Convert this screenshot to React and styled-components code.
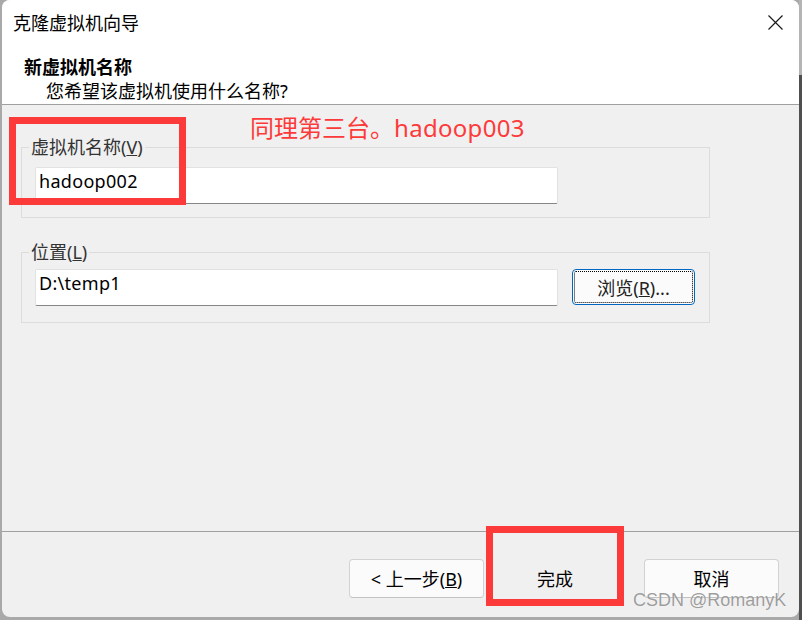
import React from 'react'
import styled, { createGlobalStyle } from 'styled-components'

const GlobalStyle = createGlobalStyle`
  html, body {
    margin: 0;
    padding: 0;
    overflow: hidden;
    background: #a9a9a9;
  }
  body {
    font-family: "Noto Sans", "Noto Sans CJK SC", sans-serif;
  }
`

// 바탕 화면 (창 뒤)
const Screen = styled.div`
  box-sizing: border-box;
  width: 802px;
  height: 620px;
  padding-left: 2px;
  background:
    linear-gradient(#b4b4b4 75px, #4f4f4f 75px) right top / 3px 100% no-repeat,
    #a9a9a9;
`

// 대화 상자 창
const Window = styled.div`
  position: relative;
  box-sizing: border-box;
  width: 797px;
  height: 617px;
  display: flex;
  flex-direction: column;
  background: #f0f0f0;
  border-radius: 8px;
  overflow: hidden;
  color: #000;
`

const Header = styled.header`
  background: #fff;
  border-bottom: 1px solid #a0a0a0;
`

const TitleBar = styled.div`
  height: 45px;
  display: flex;
  align-items: center;
  justify-content: space-between;
  padding: 0 16px 0 11px;
  font-size: 18px;
  line-height: 24px;
`

const CloseIcon = styled.svg`
  width: 15px;
  height: 15px;
  display: block;
`

const Intro = styled.div`
  padding: 10px 0 0 22px;
  font-size: 18px;
`

const Heading = styled.div`
  font-weight: 700;
  line-height: 24px;
`

const SubHeading = styled.div`
  padding-left: 22px;
  line-height: 25px;
`

const Body = styled.main`
  flex: 1;
  padding: 32px 89px 0 19px;
`

// 그룹 박스
const Group = styled.fieldset`
  box-sizing: border-box;
  height: 81px;
  margin: 0 0 24px;
  padding: ${(p) => p.$padTop}px 0 0 13px;
  border: 1px solid #dcdcdc;
  display: flex;
  align-items: flex-start;
  gap: 14px;
`

const Legend = styled.legend`
  margin-left: -6px;
  padding: 0 2px;
  font-size: 18px;
  line-height: 20px;
  color: #333;
`

const TextBox = styled.div`
  box-sizing: border-box;
  width: 523px;
  height: 37px;
  padding: 1px 0 0 3px;
  background: #fff;
  border: 1px solid #e2e2e2;
  border-bottom-color: #868686;
  border-radius: 2px;
  font-size: 18px;
  line-height: 24px;
  letter-spacing: 0.3px;
`

const BrowseButton = styled.button`
  box-sizing: border-box;
  width: 123px;
  height: 36px;
  padding: 0;
  background: #fbfbfb;
  border: 1px solid #0067c0;
  border-radius: 4px;
  outline: 1px dotted #000;
  outline-offset: -3px;
  font-family: inherit;
  font-size: 18px;
  color: #222;
`

const Footer = styled.footer`
  box-sizing: border-box;
  height: 86px;
  border-top: 1px solid #a0a0a0;
  padding: 27px 20px 0 0;
  display: flex;
  justify-content: flex-end;
  align-items: flex-start;
`

const Button = styled.button`
  box-sizing: border-box;
  width: ${(p) => p.$width || 135}px;
  height: 39px;
  margin-left: ${(p) => p.$ml || 0}px;
  padding: 0;
  background: ${(p) => (p.$flat ? 'transparent' : '#fbfbfb')};
  border: 1px solid ${(p) => (p.$flat ? 'transparent' : '#d2d2d2')};
  border-bottom-color: ${(p) => (p.$flat ? 'transparent' : '#c2c2c2')};
  border-radius: 4px;
  font-family: inherit;
  font-size: 18px;
  line-height: 24px;
  color: #000;
`

// 빨간 주석 (스크린샷 위에 그린 것)
const Mark = styled.div`
  position: absolute;
  box-sizing: border-box;
  left: ${(p) => p.$x}px;
  top: ${(p) => p.$y}px;
  width: ${(p) => p.$w}px;
  height: ${(p) => p.$h}px;
  border: 7px solid #fd3a3a;
`

const Note = styled.div`
  position: absolute;
  left: 248px;
  top: 112px;
  font-size: 24px;
  line-height: 32px;
  color: #fd3a3a;
  white-space: nowrap;
`

const NoteLatin = styled.span`
  letter-spacing: 0.3px;
`

const Watermark = styled.div`
  position: absolute;
  left: 631px;
  top: 590px;
  font-family: "Liberation Sans", Arial, sans-serif;
  font-size: 18px;
  line-height: 20px;
  color: rgba(115, 115, 115, 0.7);
  text-shadow: 0 0 1px rgba(255, 255, 255, 0.9);
  white-space: nowrap;
`

export default function App() {
  return (
    <>
      <GlobalStyle />
      <Screen>
        <Window>
          <Header>
            <TitleBar>
              <span>克隆虚拟机向导</span>
              <CloseIcon viewBox="0 0 15 15">
                <path d="M0.5 0.5L14.5 14.5M14.5 0.5L0.5 14.5" stroke="#1a1a1a" strokeWidth="1.2" fill="none" />
              </CloseIcon>
            </TitleBar>
            <Intro>
              <Heading>新虚拟机名称</Heading>
              <SubHeading>您希望该虚拟机使用什么名称?</SubHeading>
            </Intro>
          </Header>

          <Body>
            <Group $padTop={10}>
              <Legend>
                虚拟机名称(<u>V</u>)
              </Legend>
              <TextBox>hadoop002</TextBox>
            </Group>
            <Group $padTop={7}>
              <Legend>
                位置(<u>L</u>)
              </Legend>
              <TextBox>D:\temp1</TextBox>
              <BrowseButton>
                浏览(<u>R</u>)...
              </BrowseButton>
            </Group>
          </Body>

          <Footer>
            <Button>
              &lt; 上一步(<u>B</u>)
            </Button>
            <Button $flat $width={134} $ml={4}>
              完成
            </Button>
            <Button $ml={22}>取消</Button>
          </Footer>

          <Mark $x={7} $y={117} $w={177} $h={88} />
          <Mark $x={484} $y={526} $w={138} $h={80} />
          <Note>
            同理第三台。<NoteLatin>hadoop003</NoteLatin>
          </Note>
          <Watermark>CSDN @RomanyK</Watermark>
        </Window>
      </Screen>
    </>
  )
}
